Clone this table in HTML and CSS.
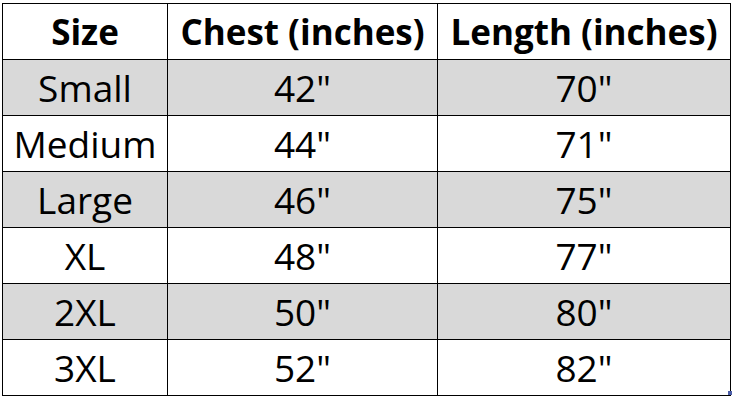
FILE: index.html
```html
<!DOCTYPE html>
<html lang="en">
<head>
  <meta charset="UTF-8" />
  <title>Size Chart</title>
  <link rel="stylesheet" href="styles.css">
</head>
<body>
  <div class="sheet">
    <table class="size-chart">
      <colgroup>
        <col class="col-size">
        <col class="col-chest">
        <col class="col-length">
      </colgroup>
      <thead>
        <tr>
          <th>Size</th>
          <th>Chest (inches)</th>
          <th>Length (inches)</th>
        </tr>
      </thead>
      <tbody>
        <tr class="shaded"><td>Small</td><td>42"</td><td>70"</td></tr>
        <tr><td>Medium</td><td>44"</td><td>71"</td></tr>
        <tr class="shaded"><td>Large</td><td>46"</td><td>75"</td></tr>
        <tr><td>XL</td><td>48"</td><td>77"</td></tr>
        <tr class="shaded"><td>2XL</td><td>50"</td><td>80"</td></tr>
        <tr><td>3XL</td><td>52"</td><td>82"</td></tr>
      </tbody>
    </table>
    <span class="fill-handle"></span>
  </div>
</body>
</html>
```
FILE: styles.css
```css
body {
  margin: 0;
  padding: 3px 0 0 2px;
  background-color: #ffffff;
  font-family: "Open Sans", Lato, sans-serif;
  color: #000000;
}
.sheet {
  position: relative;
  width: 728px;
}
.size-chart {
  border-collapse: collapse;
  table-layout: fixed;
  width: 728px;
}
.col-size {
  width: 165px;
}
.col-chest {
  width: 270px;
}
.col-length {
  width: 293px;
}
.size-chart th,
.size-chart td {
  border: 1px solid #000000;
  height: 55px;
  padding: 0;
  text-align: center;
  vertical-align: middle;
  line-height: 1;
}
.size-chart th {
  font-size: 35px;
  font-weight: bold;
}
.size-chart td {
  font-size: 37px;
  font-weight: normal;
}
.size-chart tr.shaded td {
  background-color: #d9d9d9;
}
/* little selection handle at the bottom-right corner */
.fill-handle {
  position: absolute;
  right: -2px;
  bottom: 1px;
  width: 4px;
  height: 4px;
  background-color: #4b5ea8;
}
```
